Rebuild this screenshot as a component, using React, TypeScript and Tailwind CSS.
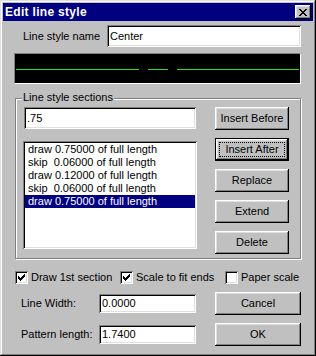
import React from 'react';

const raised =
  'bg-[#c0c0c0] shadow-[inset_-1px_-1px_0_#000,inset_1px_1px_0_#fff,inset_-2px_-2px_0_#808080,inset_2px_2px_0_#dfdfdf]';
const sunken =
  'bg-white shadow-[inset_1px_1px_0_#808080,inset_-1px_-1px_0_#fff,inset_2px_2px_0_#000,inset_-2px_-2px_0_#dfdfdf]';

function Button({ label, focused, className }: { label: string; focused?: boolean; className: string }) {
  if (focused) {
    return (
      <div className={`border border-black ${className}`}>
        <div className={`${raised} w-full h-full flex items-center justify-center p-[3px]`}>
          <div className="w-full h-full border border-dotted border-black flex items-center justify-center">
            {label}
          </div>
        </div>
      </div>
    );
  }
  return <div className={`${raised} flex items-center justify-center ${className}`}>{label}</div>;
}

function Check({ checked, label, className }: { checked: boolean; label: string; className?: string }) {
  return (
    <div className={`flex items-center gap-[3px] shrink-0 whitespace-nowrap h-[13px] ${className ?? ''}`}>
      <div className={`${sunken} w-[13px] h-[13px] shrink-0 flex items-center justify-center`}>
        {checked && (
          <svg width="7" height="7" viewBox="0 0 7 7" shapeRendering="crispEdges">
            <path d="M6 0h1v3h-1zM5 1h1v3h-1zM4 2h1v3h-1zM3 3h1v3h-1zM2 4h1v3h-1zM1 3h1v3h-1zM0 2h1v3h-1z" fill="#000" />
          </svg>
        )}
      </div>
      <span className="leading-[13px]">{label}</span>
    </div>
  );
}

const sections = [
  'draw 0.75000 of full length',
  'skip  0.06000 of full length',
  'draw 0.12000 of full length',
  'skip  0.06000 of full length',
  'draw 0.75000 of full length',
];

export default function App() {
  return (
    <div
      className="w-[316px] h-[356px] bg-[#c0c0c0] p-[3px] flex flex-col text-[11px] text-black shadow-[inset_-1px_-1px_0_#000,inset_1px_1px_0_#dfdfdf,inset_-2px_-2px_0_#808080,inset_2px_2px_0_#fff]"
      style={{ fontFamily: '"Liberation Sans", Arial, sans-serif' }}
    >
      {/* Title bar */}
      <div className="h-[18px] shrink-0 bg-[#000080] flex items-center justify-between pl-[2px] pr-[2px]">
        <span className="text-white font-bold text-[12px] leading-none tracking-[0.3px]">Edit line style</span>
        <div className={`${raised} w-[16px] h-[14px] flex items-center justify-center`}>
          <svg width="8" height="7" viewBox="0 0 8 7" shapeRendering="crispEdges">
            <path d="M0 0h2v1h-2zM6 0h2v1h-2zM1 1h2v1h-2zM5 1h2v1h-2zM2 2h4v1h-4zM3 3h2v1h-2zM2 4h4v1h-4zM1 5h2v1h-2zM5 5h2v1h-2zM0 6h2v1h-2zM6 6h2v1h-2z" fill="#000" />
          </svg>
        </div>
      </div>

      <div className="flex flex-col px-[11px]">
        {/* Name row */}
        <div className="flex items-center mt-[4px]">
          <span className="w-[93px] pl-[9px] whitespace-nowrap">Line style name</span>
          <div className={`${sunken} w-[194px] h-[22px] flex items-center pl-[3px]`}>Center</div>
        </div>

        {/* Preview */}
        <div className="mt-[6px] w-[287px] h-[31px] bg-black border-t border-l border-[#808080] border-b-white border-r-white border-b border-r">
          <svg width="285" height="29" viewBox="0 0 285 29" shapeRendering="crispEdges" className="block">
            <g stroke="#22e022" strokeWidth="1">
              <line x1="1" y1="15.5" x2="124" y2="15.5" />
              <line x1="133" y1="15.5" x2="153" y2="15.5" />
              <line x1="162" y1="15.5" x2="284" y2="15.5" />
            </g>
          </svg>
        </div>

        {/* Group box */}
        <div className="relative mt-[14px] ml-[1px] w-[286px] h-[161px] border border-[#808080] shadow-[inset_1px_1px_0_#fff,1px_1px_0_#fff] flex pt-[8px] pl-[7px]">
          <span className="absolute -top-[8px] left-[6px] bg-[#c0c0c0] px-[1px] leading-[13px]">Line style sections</span>
          <div className="flex flex-col">
            <div className={`${sunken} ml-[1px] w-[172px] h-[22px] flex items-center pl-[3px]`}>.75</div>
            <div className={`${sunken} mt-[12px] w-[174px] h-[108px] p-[2px] flex flex-col`}>
              {sections.map((s, i) => (
                <div
                  key={i}
                  className={`h-[13px] leading-[13px] pl-[3px] whitespace-pre ${i === 4 ? 'bg-[#000080] text-white' : ''}`}
                >
                  {s}
                </div>
              ))}
            </div>
          </div>
          <div className="flex flex-col ml-[18px] gap-[8px]">
            <Button label="Insert Before" className="w-[74px] h-[23px]" />
            <Button label="Insert After" focused className="w-[74px] h-[23px]" />
            <Button label="Replace" className="w-[74px] h-[23px]" />
            <Button label="Extend" className="w-[74px] h-[23px]" />
            <Button label="Delete" className="w-[74px] h-[23px]" />
          </div>
        </div>

        {/* Checkboxes */}
        <div className="flex items-center mt-[12px] ml-[1px] h-[13px]">
          <Check checked label="Draw 1st section" className="w-[105px]" />
          <Check checked label="Scale to fit ends" className="w-[105px]" />
          <Check checked={false} label="Paper scale" />
        </div>

        {/* Bottom rows */}
        <div className="flex items-center mt-[8px] h-[23px]">
          <span className="w-[85px] pl-[7px] whitespace-nowrap">Line Width:</span>
          <div className={`${sunken} w-[97px] h-[19px] flex items-center pl-[3px]`}>0.0000</div>
          <Button label="Cancel" className="ml-[19px] w-[86px] h-[23px]" />
        </div>
        <div className="flex items-center mt-[8px] h-[23px]">
          <span className="w-[85px] pl-[7px] whitespace-nowrap">Pattern length:</span>
          <div className={`${sunken} w-[97px] h-[19px] flex items-center pl-[3px]`}>1.7400</div>
          <Button label="OK" className="ml-[19px] w-[86px] h-[23px]" />
        </div>
      </div>
    </div>
  );
}
